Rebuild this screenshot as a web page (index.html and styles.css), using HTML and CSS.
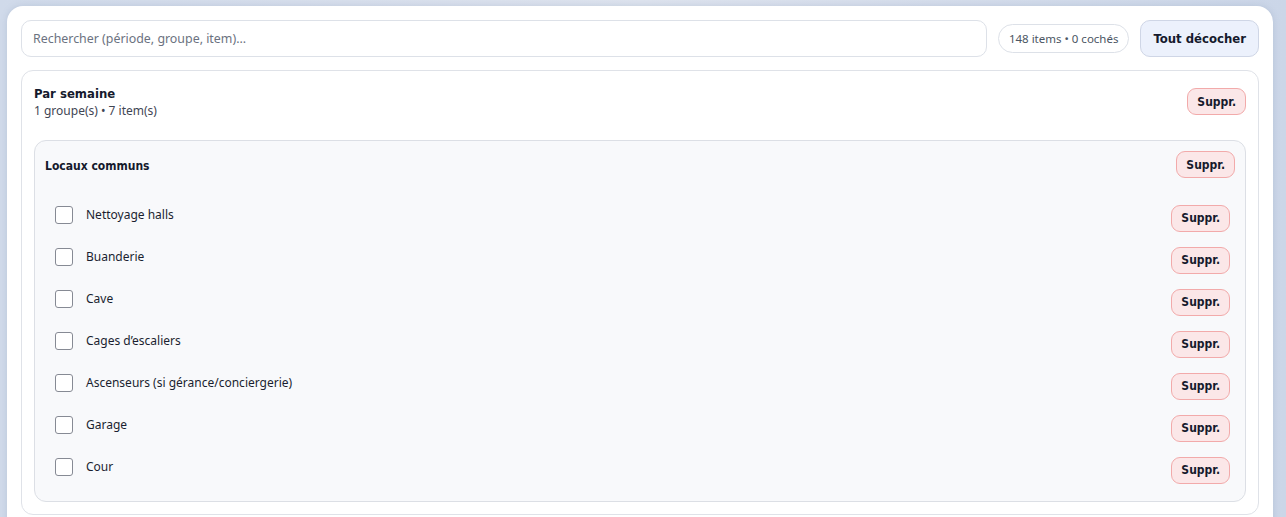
FILE: index.html
```html
<!DOCTYPE html>
<html lang="fr">
<head>
<meta charset="utf-8">
<title>Checklist</title>
<link rel="stylesheet" href="styles.css">
</head>
<body>
<div class="panel">
  <div class="toolbar">
    <input class="search" type="text" placeholder="Rechercher (période, groupe, item)...">
    <span class="pill">148 items • 0 cochés</span>
    <button class="btn-primary">Tout décocher</button>
  </div>
  <section class="section">
    <div class="section-head">
      <div>
        <div class="section-title">Par semaine</div>
        <div class="section-sub">1 groupe(s) • 7 item(s)</div>
      </div>
      <button class="btn-del section-del">Suppr.</button>
    </div>
    <div class="group">
      <div class="group-head">
        <div class="group-title">Locaux communs</div>
        <button class="btn-del">Suppr.</button>
      </div>
      <ul class="items">
        <li class="item"><label class="item-label"><span class="box"></span>Nettoyage halls</label><button class="btn-del">Suppr.</button></li>
        <li class="item"><label class="item-label"><span class="box"></span>Buanderie</label><button class="btn-del">Suppr.</button></li>
        <li class="item"><label class="item-label"><span class="box"></span>Cave</label><button class="btn-del">Suppr.</button></li>
        <li class="item"><label class="item-label"><span class="box"></span>Cages d’escaliers</label><button class="btn-del">Suppr.</button></li>
        <li class="item"><label class="item-label"><span class="box"></span>Ascenseurs (si gérance/conciergerie)</label><button class="btn-del">Suppr.</button></li>
        <li class="item"><label class="item-label"><span class="box"></span>Garage</label><button class="btn-del">Suppr.</button></li>
        <li class="item"><label class="item-label"><span class="box"></span>Cour</label><button class="btn-del">Suppr.</button></li>
      </ul>
    </div>
  </section>
</div>
</body>
</html>
```
FILE: styles.css
```css
html, body {
  margin: 0;
  padding: 0;
  height: 100%;
  overflow: hidden;
}
body {
  background: linear-gradient(90deg, #d0daea 0%, #dde3ee 50%, #cbd6e8 100%);
  font-family: "Noto Sans", "Open Sans", sans-serif;
  color: #1a1f30;
}
.panel {
  margin: 6px 13px 0 7px;
  background: #ffffff;
  border-radius: 16px;
  padding: 14px 14px 0 14px;
  height: 600px;
  box-shadow: 0 0 6px rgba(120, 140, 170, 0.25);
}
.toolbar {
  display: flex;
  align-items: center;
  gap: 11px;
}
.search {
  flex: 1;
  height: 37px;
  box-sizing: border-box;
  border: 1px solid #dde1e8;
  border-radius: 10px;
  padding: 0 11px;
  font-family: "Noto Sans", sans-serif;
  font-size: 12.4px;
  color: #333;
  outline: none;
}
.search::placeholder {
  color: #6b7280;
}
.pill {
  height: 29px;
  box-sizing: border-box;
  border: 1px solid #dde1e8;
  border-radius: 15px;
  padding: 0 10px;
  display: flex;
  align-items: center;
  font-size: 11.5px;
  color: #4b5563;
  white-space: nowrap;
}
.btn-primary,
.btn-del,
.section-title,
.group-title {
  font-family: "DejaVu Sans Condensed", "DejaVu Sans", Verdana, sans-serif;
  font-stretch: condensed;
  font-weight: 700;
  color: #151a2d;
}
.btn-primary {
  height: 37px;
  box-sizing: border-box;
  background: #ecf1fc;
  border: 1px solid #cfd6e6;
  border-radius: 10px;
  padding: 0 12px;
  font-size: 13px;
}
.section {
  margin-top: 13px;
  border: 1px solid #dfe2e8;
  border-radius: 12px;
  padding: 14px 12px 12px 12px;
}
.section-head {
  display: flex;
  justify-content: space-between;
  align-items: flex-start;
  margin-bottom: 21px;
}
.section-del {
  margin-top: 3px;
}
.section-title {
  font-size: 13px;
  line-height: 17px;
}
.section-sub {
  font-size: 12px;
  line-height: 17px;
  color: #3f4654;
}
.btn-del {
  height: 27px;
  box-sizing: border-box;
  background: #fbe7e8;
  border: 1px solid #f2aaaa;
  border-radius: 9px;
  padding: 0 9px;
  font-size: 12px;
}
.group {
  background: #f8f9fb;
  border: 1px solid #dcdfe5;
  border-radius: 12px;
  padding: 10px;
}
.group-head {
  display: flex;
  justify-content: space-between;
  align-items: center;
}
.group-title {
  font-size: 12px;
  padding-top: 3px;
}
.items {
  list-style: none;
  margin: 19px 0 0 0;
  padding: 0 5px 0 10px;
}
.item {
  height: 42px;
  display: flex;
  align-items: center;
  justify-content: space-between;
}
.item-label {
  display: flex;
  align-items: center;
  font-size: 12px;
  color: #1a1f30;
  margin-bottom: 7px;
}
.box {
  width: 18px;
  height: 18px;
  box-sizing: border-box;
  border: 1px solid #868a94;
  border-radius: 3px;
  background: #fff;
  margin-right: 13px;
}
```
